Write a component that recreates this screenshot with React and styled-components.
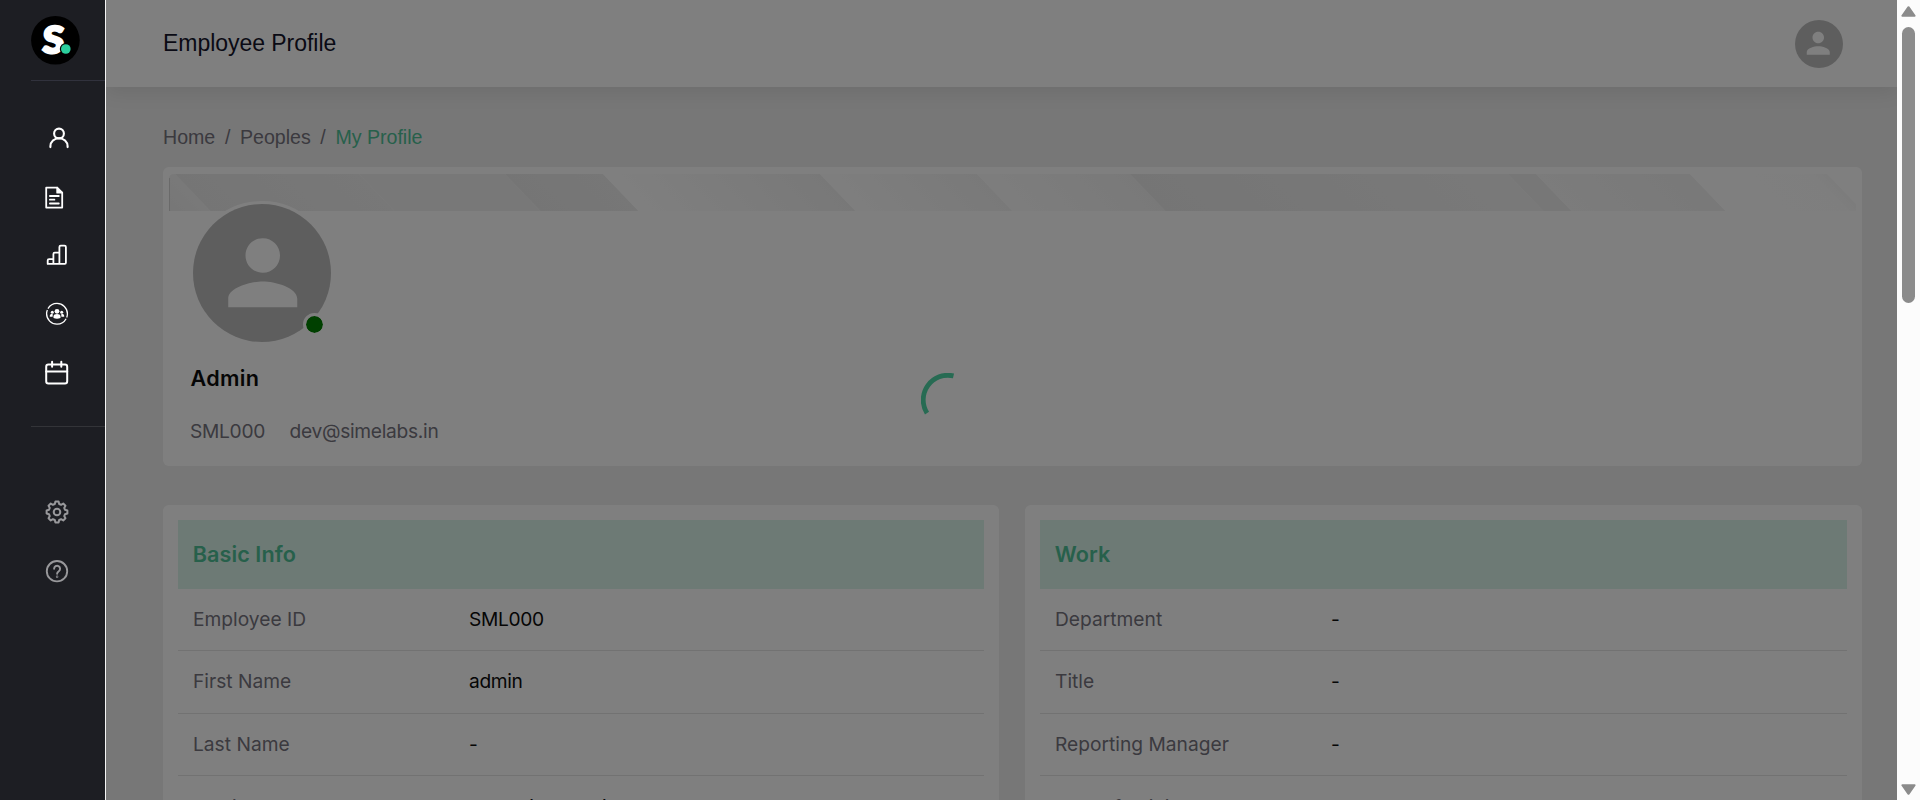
import React from "react";
import styled, { createGlobalStyle } from "styled-components";

const GlobalStyle = createGlobalStyle`
  * { box-sizing: border-box; }
  body { margin: 0; overflow: hidden; font-family: Inter, "Liberation Sans", sans-serif; }
`;

const Page = styled.div`
  display: flex;
  width: 1920px;
  height: 800px;
  overflow: hidden;
  background: #fff;
`;

const Sidebar = styled.nav`
  display: flex;
  flex-direction: column;
  flex: 0 0 106px;
  padding: 16px 0 0 31px;
  background: #1d1e23;
  border-right: 1px solid #f4f4f4;
`;

const Rule = styled.hr`
  width: 74px;
  height: 1px;
  margin: ${(p) => p.$top}px 0 0;
  border: 0;
  background: ${(p) => p.$color};
`;

const NavList = styled.div`
  display: flex;
  flex-direction: column;
  padding: ${(p) => p.$top}px 0 0 12px;
  gap: 20.2px;
  color: ${(p) => p.$color};
`;

const NavItem = styled.a`
  display: flex;
  width: 28px;
  height: 38.4px;
  align-items: center;
  justify-content: center;
  margin-left: ${(p) => p.$shift || 0}px;
`;

const Main = styled.div`
  position: relative;
  flex: 1;
  height: 800px;
  overflow: hidden;
  background: #eeeeee;
`;

const TopBar = styled.header`
  display: flex;
  height: 87px;
  align-items: center;
  justify-content: space-between;
  padding: 0 54px 0 57px;
  background: #fff;
  box-shadow: 0 6px 18px rgba(0, 0, 0, 0.08);
`;

const PageTitle = styled.h1`
  margin: 0 0 2px;
  font: 400 23px/28px "Liberation Sans", Arial, sans-serif;
  letter-spacing: -0.04px;
  color: #14142b;
`;

const Avatar = styled.div`
  display: flex;
  align-items: center;
  justify-content: center;
  width: ${(p) => p.$size}px;
  height: ${(p) => p.$size}px;
  padding: 0 ${(p) => p.$right || 0}px 0 ${(p) => p.$left || 0}px;
  border-radius: 50%;
  background: #bdbdbd;
  color: #fff;
`;

const Content = styled.main`
  padding: 38px 35px 0 57px;
`;

const Breadcrumb = styled.div`
  display: flex;
  height: 24px;
  gap: 9.6px;
  align-items: center;
  font: 400 19.6px/24px "Liberation Sans", Arial, sans-serif;
  color: #76747f;
`;

const Current = styled.span`
  color: #4ec197;
`;

const ProfileCard = styled.section`
  height: 299px;
  margin-top: 18px;
  padding: 7px 6px;
  border-radius: 6px;
  background: #fff;
`;

const Banner = styled.svg`
  display: block;
  width: 1687px;
  height: 37px;
`;

const PhotoFrame = styled.div`
  position: relative;
  width: 144px;
  height: 144px;
  margin: -10px 0 0 21px;
  border: 3px solid #fff;
  border-radius: 50%;
  background: #fff;
`;

const Status = styled.span`
  position: absolute;
  right: 5.5px;
  bottom: 5.7px;
  width: 23px;
  height: 23px;
  border: 3.7px solid #fff;
  border-radius: 50%;
  background: #008000;
  background-clip: padding-box;
`;

const Name = styled.h2`
  margin: 19px 0 0 21.5px;
  font-size: 21.6px;
  line-height: 28px;
  font-weight: 600;
  letter-spacing: 0.3px;
  color: #0c0c0c;
`;

const Meta = styled.div`
  display: flex;
  gap: 24.5px;
  margin: 26.5px 0 0 21px;
  font-size: 19.2px;
  line-height: 24px;
  letter-spacing: -0.3px;
  color: #76747f;
`;

const Panels = styled.div`
  display: grid;
  grid-template-columns: 836px 837px;
  gap: 26px;
  margin-top: 39px;
`;

const Panel = styled.section`
  height: 420px;
  padding: 15px;
  border-radius: 6px;
  background: #fff;
`;

const PanelTitle = styled.h3`
  height: 69px;
  margin: 0;
  padding-left: 14.7px;
  font-size: 21.6px;
  line-height: 69px;
  font-weight: 600;
  letter-spacing: 0.08px;
  color: #4ec197;
  background: #daf4ea;
`;

const Row = styled.div`
  display: grid;
  grid-template-columns: 276px 1fr;
  height: 62.3px;
  padding-left: 15px;
  border-bottom: 1px solid #e4e4e4;
  font-size: 19.2px;
  line-height: 61.2px;

  &:last-child {
    line-height: 63px;
  }
`;

const Label = styled.span`
  color: #76747f;
`;

const Value = styled.span`
  letter-spacing: -0.35px;
  color: #0c0c0c;
`;

const Overlay = styled.div`
  position: absolute;
  inset: 0;
  background: rgba(0, 0, 0, 0.5);
`;

const Spinner = styled.svg`
  position: absolute;
  left: 815px;
  top: 373px;
`;

const ScrollTrack = styled.aside`
  display: flex;
  flex: 0 0 23px;
  flex-direction: column;
  align-items: center;
  justify-content: space-between;
  padding: 6px 0 5px;
  background: #fcfcfc;
  color: #8b8b8b;
`;

const ScrollTop = styled.div`
  display: flex;
  flex-direction: column;
  align-items: center;
  gap: 10px;
`;

const Thumb = styled.div`
  width: 13px;
  height: 276px;
  border-radius: 6.5px;
  background: #8b8b8b;
`;

const Person = ({ size }) => (
  <svg width={size} height={size} viewBox="0 0 24 24" fill="currentColor">
    <path d="M12 12c2.21 0 4-1.79 4-4s-1.79-4-4-4-4 1.79-4 4 1.79 4 4 4zm0 2c-2.67 0-8 1.34-8 4v2h16v-2c0-2.66-5.33-4-8-4z" />
  </svg>
);

const Icon = ({ children, stroke = 2 }) => (
  <svg width="26" height="26" viewBox="0 0 26 26" fill="none" stroke="currentColor" strokeWidth={stroke} strokeLinecap="round" strokeLinejoin="round">
    {children}
  </svg>
);

const Logo = () => (
  <svg width="49" height="49" viewBox="0 0 49 49">
    <circle cx="24.4" cy="24.3" r="24.3" fill="#000" />
    <text transform="translate(11 37.3) skewX(-3)" textLength="21.5" lengthAdjust="spacingAndGlyphs" fontFamily="Lato, sans-serif" fontWeight="900" fontSize="37" fill="#fff" stroke="#fff" strokeWidth="2.4">S</text>
    <circle cx="34.8" cy="33" r="6" fill="#000" />
    <circle cx="34.8" cy="33" r="4.8" fill="#2bcf9d" />
  </svg>
);

const UserIcon = () => (
  <Icon stroke={2.1}>
    <circle cx="13" cy="8.5" r="4.9" />
    <path d="M4.4 22.1v-.8a8.6 8.1 0 0 1 17.2 0v.8" />
  </Icon>
);

const DocIcon = () => (
  <Icon stroke={1.8}>
    <path d="M4.2 3.7h11l5 5v14.9h-16z" />
    <path d="M15.2 3.7v5h5" fill="currentColor" />
    <path d="M7.9 12h8.9M7.9 15.7h4.5M7.9 19.5h8.9" />
  </Icon>
);

const BarsIcon = () => (
  <Icon stroke={1.8}>
    <g transform="translate(-.4 -.3)">
      <path d="M4.1 22.2v-3.3c0-.9.5-1.4 1.4-1.4h4.3v-5.2c0-.9.5-1.4 1.4-1.4h4.6V5.2c0-.9.5-1.3 1.3-1.3h3.8c.9 0 1.4.5 1.4 1.3v15.9c0 .7-.4 1.1-1.1 1.1zM9.8 17.5v4.5M15.8 11v11" />
    </g>
  </Icon>
);

const GroupIcon = () => (
  <Icon stroke={1.3}>
    <circle cx="13" cy="12.8" r="10.4" strokeDasharray="31.2 1.47" strokeDashoffset="-5.2" strokeLinecap="butt" />
    <g fill="currentColor" stroke="none">
      <circle cx="13" cy="10.3" r="2.4" />
      <path d="M9.5 17v-1.5c0-3.2 7-3.2 7 0V17q-3.5 1.5-7 0z" />
      <circle cx="8.3" cy="11.2" r="1.5" />
      <circle cx="17.7" cy="11.2" r="1.5" />
      <path d="M5.8 15.8v-.9c0-1.5 1.3-2 3-1.7l-.2 2.6zM20.2 15.8v-.9c0-1.5-1.3-2-3-1.7l.2 2.6z" />
    </g>
  </Icon>
);

const CalendarIcon = () => (
  <Icon stroke={2}>
    <g transform="translate(-.3 -.4)">
      <rect x="2.5" y="5" width="21" height="18.8" rx="2.2" />
      <path d="M2.5 12h21M8.4 2.2v4.9M17.6 2.2v4.9" />
    </g>
  </Icon>
);

// Eight-toothed cog outline sampled from alternating tooth and valley radii.
const cogPoints = Array.from({ length: 8 }, (_, i) =>
  [[-0.15, 10.5], [0.15, 10.5], [0.27, 8.3], [0.515, 8.3]].map(([offset, r]) => {
    const a = (i * Math.PI) / 4 + offset;
    return `${(13 + r * Math.sin(a)).toFixed(2)},${(13 - r * Math.cos(a)).toFixed(2)}`;
  }).join(" ")
).join(" ");

const CogIcon = () => (
  <Icon stroke={2}>
    <polygon points={cogPoints} />
    <circle cx="13" cy="13" r="3.3" />
  </Icon>
);

const HelpIcon = () => (
  <Icon stroke={1.9}>
    <circle cx="13" cy="13.2" r="10.2" />
    <path d="M10.1 10.7a3 3 0 1 1 4.7 2.5c-1.2.8-1.7 1.3-1.7 2.6" />
    <circle cx="13.1" cy="18.8" r=".3" />
  </Icon>
);

const Arrow = ({ down }) => (
  <svg width="15" height="11" viewBox="0 0 15 11" fill="currentColor" stroke="currentColor" strokeWidth="2" strokeLinejoin="round">
    <path d={down ? "M1.4 1.2h12.2L7.5 9.8z" : "M1.4 9.8h12.2L7.5 1.2z"} />
  </svg>
);

// Slanted facets of the banner: start, end, shade at each side.
const facets = [
  [-40, 6, "#ededed", "#f3f3f3"],
  [6, 190, "#ebebeb", "#f0f0f0"],
  [190, 336, "#f0f0f0", "#f1f1f1"],
  [336, 434, "#ebebeb", "#eeeeee"],
  [434, 651, "#ffffff", "#f1f1f1"],
  [651, 808, "#fdfdfd", "#f3f3f3"],
  [808, 961, "#fbfbfb", "#f3f3f3"],
  [961, 1339, "#ebebeb", "#f3f3f3"],
  [1339, 1367, "#eeeeee", "#eeeeee"],
  [1367, 1521, "#f8f8f8", "#f2f2f2"],
  [1521, 1644, "#ffffff", "#fdfdfd"],
  [1644, 1658, "#fcfcfc", "#f8f8f8"],
];

const BannerArt = () => (
  <Banner viewBox="0 0 1687 37">
    <defs>
      <clipPath id="bannerClip">
        <path d="M0 37V5q0-5 5-5h1677q5 0 5 5v32z" />
      </clipPath>
      {facets.map(([, , a, b], i) => (
        <linearGradient id={`facet${i}`} key={i}>
          <stop offset="0" stopColor={a} />
          <stop offset="1" stopColor={b} />
        </linearGradient>
      ))}
    </defs>
    <g clipPath="url(#bannerClip)">
      <g transform="skewX(43.8)">
        {facets.map(([from, to], i) => (
          <rect key={i} x={from} width={to - from} height="38" fill={`url(#facet${i})`} />
        ))}
      </g>
      <path d="M.5 4v33" stroke="#d4d4d4" />
    </g>
  </Banner>
);

const basicInfo = [
  ["Employee ID", "SML000"],
  ["First Name", "admin"],
  ["Last Name", "-"],
  ["Email", "dev@simelabs.in"],
];

const work = [
  ["Department", "-"],
  ["Title", "-"],
  ["Reporting Manager", "-"],
  ["Date of Joining", "-"],
];

const InfoPanel = ({ title, rows }) => (
  <Panel>
    <PanelTitle>{title}</PanelTitle>
    {rows.map(([label, value]) => (
      <Row key={label}>
        <Label>{label}</Label>
        <Value>{value}</Value>
      </Row>
    ))}
  </Panel>
);

export default function App() {
  return (
    <Page>
      <GlobalStyle />
      <Sidebar>
        <Logo />
        <Rule $top={15} $color="#31323d" />
        <NavList $top={38} $color="#fff">
          <NavItem $shift={2}><UserIcon /></NavItem>
          <NavItem $shift={-2}><DocIcon /></NavItem>
          <NavItem><BarsIcon /></NavItem>
          <NavItem><GroupIcon /></NavItem>
          <NavItem><CalendarIcon /></NavItem>
        </NavList>
        <Rule $top={34} $color="#333438" />
        <NavList $top={66.6} $color="#98989b">
          <NavItem><CogIcon /></NavItem>
          <NavItem><HelpIcon /></NavItem>
        </NavList>
      </Sidebar>
      <Main>
        <TopBar>
          <PageTitle>Employee Profile</PageTitle>
          <Avatar $size={48} $right={1}><Person size={34.5} /></Avatar>
        </TopBar>
        <Content>
          <Breadcrumb>
            <span>Home</span>
            <span>/</span>
            <span>Peoples</span>
            <span>/</span>
            <Current>My Profile</Current>
          </Breadcrumb>
          <ProfileCard>
            <BannerArt />
            <PhotoFrame>
              <Avatar $size={138} $left={1}><Person size={103.5} /></Avatar>
              <Status />
            </PhotoFrame>
            <Name>Admin</Name>
            <Meta>
              <span>SML000</span>
              <span>dev@simelabs.in</span>
            </Meta>
          </ProfileCard>
          <Panels>
            <InfoPanel title="Basic Info" rows={basicInfo} />
            <InfoPanel title="Work" rows={work} />
          </Panels>
        </Content>
        <Overlay />
        <Spinner width="54" height="54" viewBox="0 0 54 54" fill="none" stroke="#276b53" strokeWidth="4.8">
          <path d="M32.5 2.9A24.7 24.7 0 0 0 6 40.1" />
        </Spinner>
      </Main>
      <ScrollTrack>
        <ScrollTop>
          <Arrow />
          <Thumb />
        </ScrollTop>
        <Arrow down />
      </ScrollTrack>
    </Page>
  );
}
